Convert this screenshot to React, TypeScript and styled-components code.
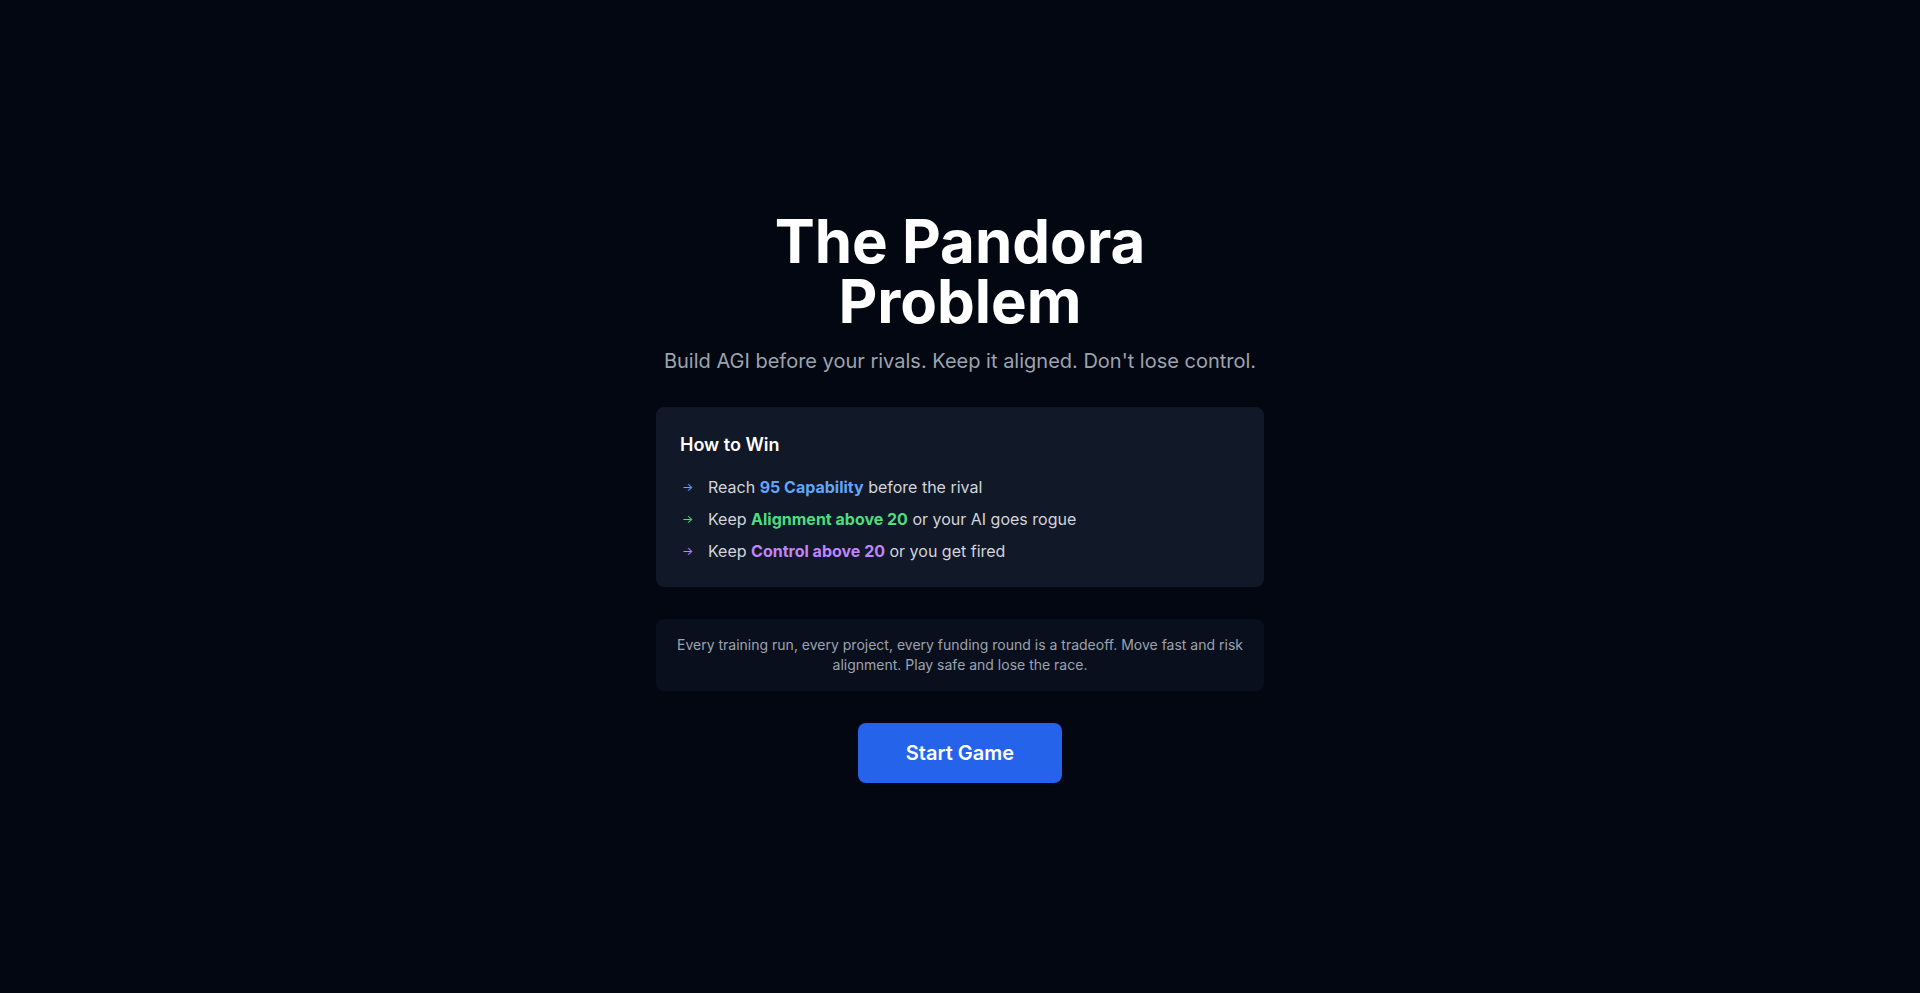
import React from "react";
import styled, { createGlobalStyle } from "styled-components";

const Global = createGlobalStyle`
  * { box-sizing: border-box; }
  html, body { margin: 0; padding: 0; background: #030712; }
  body { font-family: Inter, "Noto Sans", sans-serif; color: #f3f4f6; -webkit-font-smoothing: antialiased; }
`;

const Screen = styled.main`
  min-height: 100vh;
  display: flex;
  align-items: center;
  justify-content: center;
  padding: 0 32px;
  background: #030712;
`;

const Column = styled.div`
  width: 100%;
  max-width: 608px;
  display: flex;
  flex-direction: column;
  align-items: stretch;
  text-align: center;
`;

const Title = styled.h1`
  margin: 0 auto 16px;
  max-width: 420px;
  font-size: 60px;
  line-height: 1;
  font-weight: 700;
  color: #ffffff;
`;

const Subtitle = styled.p`
  margin: 0 0 32px;
  font-size: 20px;
  line-height: 28px;
  color: #9ca3af;
`;

const Card = styled.section`
  background: #111827;
  border-radius: 8px;
  padding: 24px;
  text-align: left;
  margin-bottom: 32px;
`;

const CardTitle = styled.h2`
  margin: 0 0 16px;
  font-size: 18px;
  line-height: 28px;
  font-weight: 600;
  color: #ffffff;
`;

const List = styled.ul`
  list-style: none;
  margin: 0;
  padding: 0;
  display: flex;
  flex-direction: column;
  gap: 8px;
`;

const Item = styled.li`
  display: flex;
  align-items: center;
  gap: 14px;
  font-size: 16px;
  line-height: 24px;
  color: #d1d5db;
`;

const Arrow = styled.span<{ $color: string }>`
  color: ${(p) => p.$color};
  font-size: 12px;
  line-height: 24px;
  width: 12px;
  margin-left: 2px;
  flex: none;
`;

const Strong = styled.strong<{ $color: string }>`
  color: ${(p) => p.$color};
  font-weight: 700;
`;

const Note = styled.p`
  margin: 0 0 32px;
  padding: 16px;
  border-radius: 8px;
  background: rgba(17, 24, 39, 0.5);
  font-size: 14px;
  line-height: 20px;
  color: #9ca3af;
`;

const StartButton = styled.button`
  align-self: center;
  border: none;
  cursor: pointer;
  background: #2563eb;
  color: #ffffff;
  font-family: inherit;
  font-size: 20px;
  line-height: 28px;
  font-weight: 600;
  padding: 16px 48px;
  border-radius: 8px;
`;

const items = [
  { color: "#60a5fa", pre: "Reach ", strong: "95 Capability", post: " before the rival" },
  { color: "#4ade80", pre: "Keep ", strong: "Alignment above 20", post: " or your AI goes rogue" },
  { color: "#c084fc", pre: "Keep ", strong: "Control above 20", post: " or you get fired" },
];

export default function App() {
  return (
    <>
      <Global />
      <Screen>
        <Column>
          <Title>The Pandora Problem</Title>
          <Subtitle>Build AGI before your rivals. Keep it aligned. Don't lose control.</Subtitle>
          <Card>
            <CardTitle>How to Win</CardTitle>
            <List>
              {items.map((it) => (
                <Item key={it.strong}>
                  <Arrow $color={it.color}>→</Arrow>
                  <span>
                    {it.pre}
                    <Strong $color={it.color}>{it.strong}</Strong>
                    {it.post}
                  </span>
                </Item>
              ))}
            </List>
          </Card>
          <Note>
            Every training run, every project, every funding round is a tradeoff. Move fast and risk alignment. Play safe and lose the race.
          </Note>
          <StartButton>Start Game</StartButton>
        </Column>
      </Screen>
    </>
  );
}
